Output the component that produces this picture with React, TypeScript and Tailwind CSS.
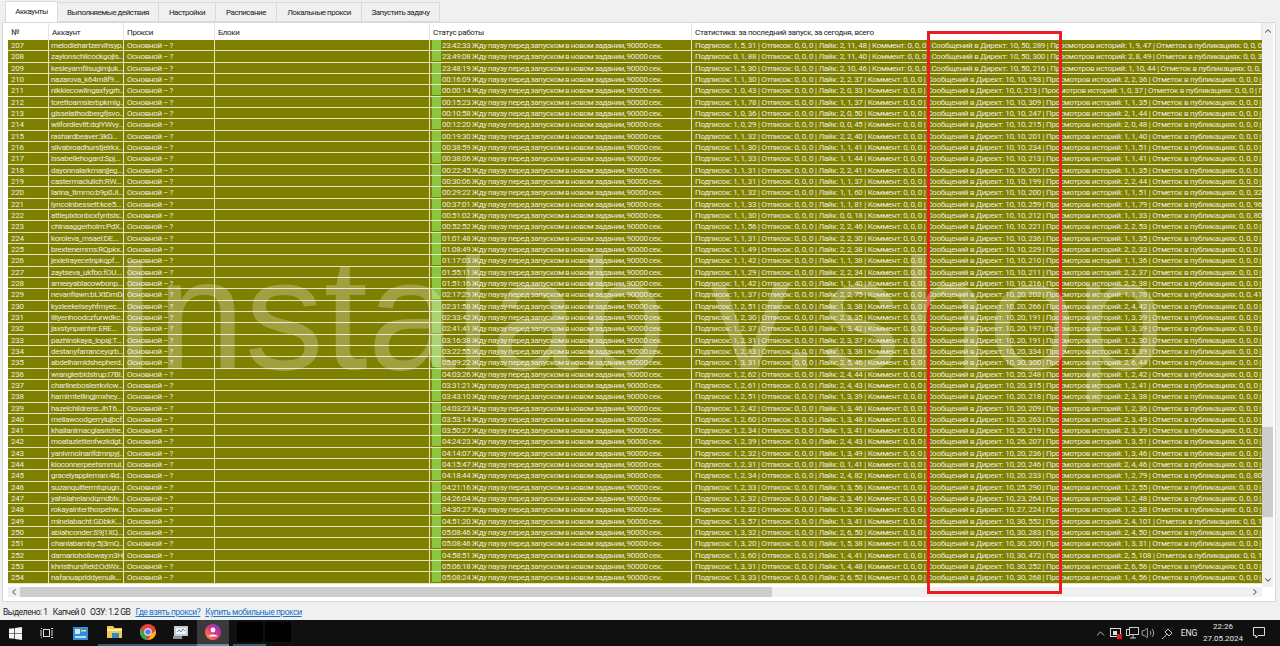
import { ChevronUp, ChevronDown, ChevronLeft, ChevronRight, Volume2 } from "lucide-react";

const tabs = ["Аккаунты", "Выполняемые действия", "Настройки", "Расписание", "Локальные прокси", "Запустить задачу"];
const tabW = ["w-[53px]", "w-[101px]", "w-[57px]", "w-[61px]", "w-[85px]", "w-[78px]"];

// №, account, time, subs, likes, direct, stories, marks
const rows: [number, string, string, string, string, string, string, string][] = [
  [207, "melodiehartzervlhsyp...", "23:42:33", "1, 5, 31", "2, 11, 48", "10, 50, 289", "1, 9, 47", "0, 0, 0"],
  [208, "zayionschilcockgojls...", "23:49:08", "0, 1, 88", "2, 11, 40", "10, 50, 300", "2, 8, 49", "0, 0, 3"],
  [209, "kesleyamflisugimjuk...", "23:48:19", "1, 5, 30", "2, 10, 46", "10, 50, 216", "1, 10, 44", "0, 0, 0"],
  [210, "nazarova_k64m8f9...", "00:16:09", "1, 1, 30", "2, 2, 37", "10, 10, 193", "2, 2, 36", "0, 0, 0"],
  [211, "nikkiecowlingaxfygrh...", "00:00:14", "1, 0, 43", "2, 0, 33", "10, 0, 213", "1, 0, 37", "0, 0, 0"],
  [212, "torettoamslerbpkmlg...", "00:15:23", "1, 1, 78", "1, 1, 37", "10, 10, 309", "1, 1, 35", "0, 0, 0"],
  [213, "gisselathodbergfjsvo...", "00:10:58", "1, 0, 36", "2, 0, 50", "10, 10, 247", "2, 1, 44", "0, 0, 0"],
  [214, "wilfordlevitt:dqlYWvy...", "00:12:20", "1, 0, 29", "0, 0, 45", "10, 10, 215", "2, 0, 48", "0, 0, 0"],
  [215, "rashardbeaver:3kD...", "00:19:30", "1, 1, 32", "2, 2, 40", "10, 10, 201", "1, 1, 40", "0, 0, 0"],
  [216, "silvabroadhurstjelrkx...", "00:38:59", "1, 1, 30", "1, 1, 41", "10, 10, 234", "1, 1, 51", "0, 0, 0"],
  [217, "issabellehogard:Spj...", "00:38:06", "1, 1, 33", "1, 1, 44", "10, 10, 213", "1, 1, 41", "0, 0, 0"],
  [218, "dayonnalarkmanjjeg...", "00:22:45", "1, 1, 31", "2, 2, 41", "10, 10, 201", "1, 1, 35", "0, 0, 0"],
  [219, "castermaclulich:RW...", "00:30:06", "1, 1, 31", "1, 1, 37", "10, 10, 199", "2, 2, 44", "0, 0, 0"],
  [220, "larina_tlmmo:b9p0Jl...", "00:29:22", "1, 1, 32", "1, 1, 60", "10, 10, 200", "1, 1, 51", "0, 0, 32"],
  [221, "lyncolnbessett:kce5...", "00:37:01", "1, 1, 33", "1, 1, 81", "10, 10, 259", "1, 1, 79", "0, 0, 96"],
  [222, "attiepixtonbcxfyntsls:...", "00:51:02", "1, 1, 30", "0, 0, 18", "10, 10, 212", "1, 1, 33", "0, 0, 80"],
  [223, "chinaaggerholm:PdX...", "00:52:52", "1, 1, 56", "2, 2, 46", "10, 10, 221", "2, 2, 53", "0, 0, 0"],
  [224, "koroleva_msael:DE...", "01:01:48", "1, 1, 31", "2, 2, 30", "10, 10, 236", "1, 1, 35", "0, 0, 0"],
  [225, "brextenemms:RQpkx...", "01:08:49", "1, 1, 49", "2, 2, 38", "10, 10, 229", "2, 2, 33", "0, 0, 0"],
  [226, "jexielrayecetnpkqpf...", "01:17:03", "1, 1, 42", "1, 1, 38", "10, 10, 210", "1, 1, 36", "0, 0, 0"],
  [227, "zaytseva_ukfbo:fOU...", "01:55:11", "1, 1, 29", "2, 2, 34", "10, 10, 211", "2, 2, 37", "0, 0, 0"],
  [228, "ameeyablacowbonp...", "01:51:16", "1, 1, 42", "1, 1, 40", "10, 10, 216", "2, 2, 38", "0, 0, 0"],
  [229, "nevanflawn:bLXtDmDr", "02:17:29", "1, 1, 37", "2, 2, 75", "10, 20, 202", "1, 1, 78", "0, 0, 41"],
  [230, "kyzleekelseyhfmyec...", "02:31:58", "1, 2, 51", "1, 3, 38", "10, 20, 266", "2, 4, 42", "0, 0, 0"],
  [231, "lillyenhoodczfurwdkc...", "02:33:42", "1, 2, 30", "2, 3, 35", "10, 20, 191", "1, 3, 39", "0, 0, 0"],
  [232, "jaxstynpainter:ERE...", "02:41:41", "1, 2, 37", "1, 3, 42", "10, 20, 197", "1, 3, 39", "0, 0, 0"],
  [233, "pazhinskaya_lopaj:T...", "03:16:38", "1, 2, 31", "2, 3, 37", "10, 20, 191", "1, 2, 30", "0, 0, 0"],
  [234, "destanyfarranceyqrb...", "03:22:55", "1, 2, 83", "1, 3, 38", "10, 20, 334", "2, 3, 39", "0, 0, 0"],
  [235, "abdelhamidshepherd...", "05:09:22", "1, 3, 31", "2, 5, 46", "10, 30, 300", "2, 6, 44", "0, 0, 0"],
  [236, "wranglerbidstrup:I7Bi...", "04:03:26", "1, 2, 62", "2, 4, 44", "10, 20, 248", "1, 2, 42", "0, 0, 0"],
  [237, "charlineboslerrkvlcw...", "03:31:21", "1, 2, 61", "2, 4, 43", "10, 20, 315", "1, 2, 41", "0, 0, 0"],
  [238, "hamimtellingjmxhey...", "03:43:10", "1, 2, 51", "1, 3, 39", "10, 20, 218", "2, 3, 38", "0, 0, 0"],
  [239, "hazelchildrens:JhT6...", "04:03:23", "1, 2, 42", "1, 3, 46", "10, 20, 209", "1, 2, 36", "0, 0, 0"],
  [240, "meliawoodgerrylujbcf...", "03:53:14", "1, 2, 60", "1, 3, 48", "10, 20, 263", "2, 3, 49", "0, 0, 0"],
  [241, "khailanimacglasriche...", "03:50:27", "1, 2, 34", "1, 3, 41", "10, 20, 219", "2, 3, 39", "0, 0, 0"],
  [242, "moatazlettenfwzkdgt...", "04:24:23", "1, 2, 39", "2, 4, 43", "10, 26, 207", "1, 3, 51", "0, 0, 0"],
  [243, "yanivmolnarlfdmnpyj...", "04:14:07", "1, 2, 32", "1, 3, 49", "10, 20, 236", "1, 3, 46", "0, 0, 0"],
  [244, "kioconnerpeetsmmul...", "04:15:47", "1, 2, 31", "0, 1, 41", "10, 20, 246", "2, 4, 46", "0, 0, 0"],
  [245, "gracelyappleman:4ld...", "04:18:44", "1, 2, 34", "2, 4, 82", "10, 20, 233", "1, 2, 79", "0, 0, 80"],
  [246, "suzanquiltermtqrugn...", "04:21:16", "1, 2, 33", "1, 3, 56", "10, 25, 290", "1, 2, 55", "0, 0, 0"],
  [247, "yahsiahelandqmdblv...", "04:26:04", "1, 2, 32", "2, 3, 46", "10, 23, 264", "1, 2, 48", "0, 0, 0"],
  [248, "rokayainterthorpehw...", "04:30:27", "1, 2, 32", "1, 2, 36", "10, 27, 224", "1, 2, 38", "0, 0, 0"],
  [249, "minelabacht:GDbkK...", "04:51:20", "1, 3, 57", "1, 3, 41", "10, 30, 552", "2, 4, 101", "0, 0, 1"],
  [250, "abiahconder:S9j1XQ...", "05:08:46", "1, 3, 32", "2, 6, 50", "10, 30, 283", "2, 4, 50", "0, 0, 0"],
  [251, "chaniabamby:5j3mQ...", "05:08:46", "1, 3, 20", "1, 5, 38", "10, 30, 200", "1, 3, 31", "0, 0, 0"],
  [252, "damarioholloway:n3H...", "04:58:51", "1, 3, 60", "1, 4, 41", "10, 30, 472", "2, 5, 108", "0, 0, 1"],
  [253, "khristhursfield:OdWx...", "05:06:18", "1, 3, 31", "1, 4, 48", "10, 30, 252", "2, 6, 56", "0, 0, 0"],
  [254, "nafanuapriddyenulk...", "05:08:24", "1, 3, 33", "2, 6, 52", "10, 30, 268", "1, 4, 56", "0, 0, 0"],
];

function Row({ r }: { r: (typeof rows)[number] }) {
  const stats = `Подписок: ${r[3]} | Отписок: 0, 0, 0 | Лайк: ${r[4]} | Коммент: 0, 0, 0 | Сообщений в Директ: ${r[5]} | Просмотров историй: ${r[6]} | Отметок в публикациях: ${r[7]} | Подписок на хештеги: 0, 0, 0`;
  return (
    <div className="flex h-[11.34px] bg-[#808000] border-b border-[#e4e4c8] text-[#ecece0] overflow-hidden leading-[11px]">
      <div className="w-[41px] shrink-0 border-r border-[#e4e4c8] pl-[3px]">{r[0]}</div>
      <div className="w-[75px] shrink-0 border-r border-[#e4e4c8] pl-[2px] whitespace-nowrap overflow-hidden">{r[1]}</div>
      <div className="w-[91px] shrink-0 border-r border-[#e4e4c8] pl-[3px]">Основной − ?</div>
      <div className="w-[215px] shrink-0 border-r border-[#e4e4c8]" />
      <div className="w-[262px] shrink-0 border-r border-[#e4e4c8] flex whitespace-nowrap overflow-hidden [word-spacing:-0.4px]">
        <span className="w-[9px] h-[10px] ml-[2px] mr-[1px] shrink-0 bg-[#8cc63f]" />
        {r[2]} Жду паузу перед запуском в новом задании, 90000 сек.
      </div>
      <div className="w-[570px] shrink-0 pl-[3px] whitespace-nowrap overflow-hidden tracking-[-0.27px]">{stats}</div>
    </div>
  );
}

function Header() {
  const cols: [string, string][] = [
    ["№", "w-[41px]"],
    ["Аккаунт", "w-[75px]"],
    ["Прокси", "w-[91px]"],
    ["Блоки", "w-[215px]"],
    ["Статус работы", "w-[262px]"],
    ["Статистика: за последний запуск, за сегодня, всего", "w-[570px]"],
  ];
  return (
    <div className="flex h-[17px] bg-white text-[#222]">
      {cols.map(([t, w]) => (
        <div key={t} className={`${w} shrink-0 border-r border-[#e5e5e5] pl-[3px] pt-[4px] leading-[12px]`}>
          {t}
        </div>
      ))}
    </div>
  );
}

function Taskbar() {
  return (
    <div className="h-[26px] bg-[#101010] flex items-center relative text-[#e6e6e6] tracking-normal">
      <div className="w-[31px] flex justify-center">
        <svg width="13" height="13" viewBox="0 0 16 16" fill="#f4f4f4">
          <path d="M0 2.3 6.6 1.4V7.6H0ZM7.4 1.3 16 0V7.6H7.4ZM0 8.4H6.6V14.6L0 13.7ZM7.4 8.4H16V16L7.4 14.7Z" />
        </svg>
      </div>
      <div className="w-[32px] flex justify-center">
        <svg width="14" height="12" viewBox="0 0 14 12" fill="none" stroke="#ddd">
          <rect x="3.5" y="2.5" width="6" height="7" />
          <path d="M1 1.5H2M1 10.5H2M1 3V9M11 1.5H13M11 10.5H13M12 3V9" />
        </svg>
      </div>
      <div className="w-[35px] h-full flex justify-center items-center">
        <svg width="15" height="13" viewBox="0 0 15 13">
          <rect width="15" height="13" fill="#2f8fd8" />
          <rect x="2" y="2" width="5" height="5" fill="#cfe8f8" />
          <rect x="8" y="3" width="5" height="1.5" fill="#f6d878" />
          <rect x="2" y="9" width="11" height="2" fill="#bcdcf2" />
        </svg>
      </div>
      <div className="w-[33px] h-full flex justify-center items-center border-b-2 border-[#3c5a70]">
        <svg width="16" height="14" viewBox="0 0 16 14">
          <path d="M0 1H6L7.5 3H15V13H0Z" fill="#f2c94c" />
          <rect x="0" y="4" width="15" height="2" fill="#fbe9a6" />
          <rect x="5" y="8" width="7" height="5" fill="#2d8bcb" />
        </svg>
      </div>
      <div className="w-[33px] h-full flex justify-center items-center border-b-2 border-[#3c5a70]">
        <svg width="16" height="16" viewBox="0 0 16 16">
          <circle cx="8" cy="8" r="8" fill="#ea4335" />
          <path d="M8 16A8 8 0 0 1 1 4L5 10.5 8 16Z" fill="#34a853" />
          <path d="M15.8 6.5A8 8 0 0 1 8 16L11.5 10 15.8 6.5Z" fill="#fbbc05" />
          <circle cx="8" cy="8" r="3.7" fill="#fff" />
          <circle cx="8" cy="8" r="2.8" fill="#4285f4" />
        </svg>
      </div>
      <div className="w-[33px] h-full flex justify-center items-center border-b-2 border-[#3c5a70]">
        <svg width="16" height="14" viewBox="0 0 16 14">
          <rect x="1" y="1" width="14" height="10" fill="#c8ccd0" />
          <rect x="3" y="3" width="10" height="6" fill="#eef2f6" />
          <path d="M4 7 6 5 8 7 10 4 12 6" fill="none" stroke="#5f90c0" />
          <rect x="0" y="11" width="9" height="3" fill="#8d9299" />
        </svg>
      </div>
      <div className="w-[32px] h-full flex justify-center items-center bg-[#3a3a3a] border-b-2 border-[#6a8aa0]">
        <svg width="16" height="16" viewBox="0 0 16 16">
          <defs>
            <linearGradient id="ig" x1="0" y1="1" x2="1" y2="0">
              <stop offset="0" stopColor="#f9a825" />
              <stop offset="0.5" stopColor="#e5327e" />
              <stop offset="1" stopColor="#5b3fd0" />
            </linearGradient>
          </defs>
          <circle cx="8" cy="8" r="8" fill="url(#ig)" />
          <circle cx="8" cy="6" r="2.4" fill="#fff" />
          <path d="M3.5 12.5C4 9.8 12 9.8 12.5 12.5Z" fill="#fff" />
        </svg>
      </div>
      <div className="w-[33px] h-full flex justify-center items-center border-b-2 border-[#3c5a70] ml-[4px]">
        <div className="w-[26px] h-[20px] bg-black" />
      </div>
      <div className="w-[26px] h-[20px] bg-black ml-[-1px] mb-[2px]" />

      <div className="ml-auto flex items-center h-full pr-[8px]">
        <div className="w-[16px] flex justify-center">
          <ChevronUp size={13} strokeWidth={1.5} />
        </div>
        <div className="w-[16px] flex justify-center">
          <svg width="12" height="12" viewBox="0 0 12 12">
            <rect x="0.5" y="1.5" width="10" height="8" fill="none" stroke="#ddd" />
            <rect x="3" y="4" width="4" height="4" fill="#ddd" />
            <rect x="7" y="7" width="5" height="5" fill="#e81123" />
          </svg>
        </div>
        <div className="w-[16px] flex justify-center">
          <svg width="13" height="12" viewBox="0 0 13 12" fill="none" stroke="#ccc">
            <rect x="3.5" y="0.5" width="9" height="7" />
            <rect x="0.5" y="2.5" width="3" height="6" />
            <path d="M7 8V11M4 11H10" />
          </svg>
        </div>
        <div className="w-[16px] flex justify-center">
          <Volume2 size={14} strokeWidth={1.2} />
        </div>
        <div className="w-[22px] flex justify-center">
          <svg width="13" height="13" viewBox="0 0 13 13" fill="none" stroke="#ccc">
            <path d="M1 12C3 10 5 9 6 7M4 5 8 9M7 2 11 6 8 9 4 5Z" />
          </svg>
        </div>
        <span className="w-[22px] text-center text-[8.5px] leading-none">ENG</span>
        <div className="w-[46px] text-center text-[8px] leading-[12px]">
          <div>22:26</div>
          <div>27.05.2024</div>
        </div>
        <div className="w-[26px] flex justify-center">
          <svg width="12" height="12" viewBox="0 0 12 12" fill="none" stroke="#ddd">
            <path d="M0.5 0.5H11.5V8.5H5L3 11V8.5H0.5Z" />
          </svg>
        </div>
      </div>
    </div>
  );
}

export default function App() {
  return (
    <div className="w-[1280px] h-[646px] flex flex-col bg-[#f0f0f0] overflow-hidden text-[8px] tracking-[-0.3px] font-['Roboto',sans-serif] relative">
      {/* tabs */}
      <div className="flex h-[22px] pl-[5px] pt-[1px] items-stretch text-[#222] tracking-[-0.5px]">
        {tabs.map((t, i) => (
          <div
            key={t}
            className={`${tabW[i]} text-center ${i === 0 ? "bg-white border border-b-0 border-[#d9d9d9] leading-[20px]" : "bg-[#f0f0f0] border border-l-0 border-[#d9d9d9] mt-[1px] leading-[20px]"}`}
          >
            {t}
          </div>
        ))}
      </div>

      {/* tab body */}
      <div className="h-[580px] ml-[2px] mr-[4px] bg-white border border-[#d9d9d9] pl-[5px] pr-[2px] flex flex-col">
        <div className="flex h-[564px] overflow-hidden">
          <div className="w-[1254px] shrink-0 overflow-hidden">
            <Header />
            {rows.map((r) => (
              <Row key={r[0]} r={r} />
            ))}
          </div>
          <div className="w-[12px] shrink-0 bg-[#f0f0f0] flex flex-col items-center">
            <ChevronUp size={10} strokeWidth={2.5} className="text-[#555] mt-[3px]" />
            <div className="w-full h-[90px] bg-[#cdcdcd] mt-[391px] shrink-0" />
            <ChevronDown size={10} strokeWidth={2.5} className="text-[#555] mt-auto mb-[2px]" />
          </div>
        </div>
        <div className="flex h-[10px] w-[1254px] bg-[#f0f0f0] items-center">
          <ChevronLeft size={10} strokeWidth={2.5} className="text-[#555] w-[12px]" />
          <div className="w-[752px] h-full bg-[#cdcdcd]" />
          <ChevronRight size={10} strokeWidth={2.5} className="text-[#555] ml-auto mr-[2px]" />
        </div>
      </div>

      {/* status bar */}
      <div className="h-[18px] flex items-center pl-[3px] pt-[3px] gap-[5px] text-[8.5px] tracking-[-0.45px] text-[#222] whitespace-nowrap">
        <span>Выделено: 1</span>
        <span>Капчей 0</span>
        <span>ОЗУ: 1.2 GB</span>
        <span className="text-[#1a73c8] underline">Где взять прокси?</span>
        <span className="text-[#1a73c8] underline">Купить мобильные прокси</span>
      </div>

      <Taskbar />

      {/* red annotation frame */}
      <div className="absolute left-[927px] top-[31px] w-[135px] h-[563px] border-[3px] border-[#ed1c24] pointer-events-none" />

      {/* watermark over the list */}
      <div className="absolute left-[113px] top-[235px] text-[158px] leading-[158px] tracking-normal text-white/25 font-['Liberation_Sans',sans-serif] pointer-events-none whitespace-nowrap">
        Instalab v.shop
      </div>
    </div>
  );
}
